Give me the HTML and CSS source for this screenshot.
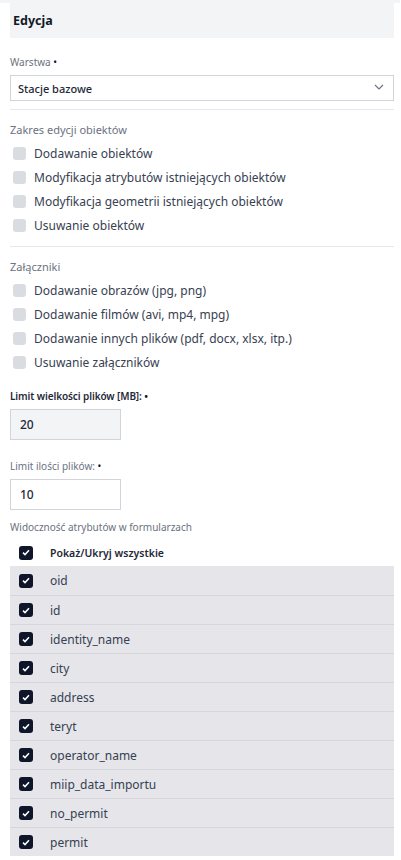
FILE: index.html
```html
<!DOCTYPE html>
<html lang="pl">
<head>
<meta charset="utf-8">
<link rel="stylesheet" href="styles.css">
</head>
<body>
<div class="topbar"></div>
<div class="panel">
  <div class="header">Edycja</div>

  <div class="field-label first">Warstwa <span class="req">•</span></div>
  <div class="select">
    <span>Stacje bazowe</span>
    <svg class="chev" width="10" height="6" viewBox="0 0 10 6"><path d="M1 1l4 4 4-4" fill="none" stroke="#6b7280" stroke-width="1.2"/></svg>
  </div>

  <div class="divider"></div>

  <div class="section">
    <div class="section-label">Zakres edycji obiektów</div>
    <div class="check-row"><span class="box"></span>Dodawanie obiektów</div>
    <div class="check-row"><span class="box"></span>Modyfikacja atrybutów istniejących obiektów</div>
    <div class="check-row"><span class="box"></span>Modyfikacja geometrii istniejących obiektów</div>
    <div class="check-row"><span class="box"></span>Usuwanie obiektów</div>
  </div>

  <div class="divider"></div>

  <div class="section">
    <div class="section-label">Załączniki</div>
    <div class="check-row"><span class="box"></span>Dodawanie obrazów (jpg, png)</div>
    <div class="check-row"><span class="box"></span>Dodawanie filmów (avi, mp4, mpg)</div>
    <div class="check-row"><span class="box"></span>Dodawanie innych plików (pdf, docx, xlsx, itp.)</div>
    <div class="check-row"><span class="box"></span>Usuwanie załączników</div>
  </div>

  <div class="field-label strong limit1">Limit wielkości plików [MB]: <span class="req">•</span></div>
  <div class="num-input disabled">20</div>

  <div class="field-label limit2">Limit ilości plików: <span class="req">•</span></div>
  <div class="num-input">10</div>

  <div class="field-label attrs">Widoczność atrybutów w formularzach</div>
  <div class="all-row">
    <span class="cb"><svg width="8" height="7" viewBox="0 0 8 7"><path d="M1 3.6l2 2L7 1.2" fill="none" stroke="#fff" stroke-width="1.5"/></svg></span>
    <span>Pokaż/Ukryj wszystkie</span>
  </div>
  <div class="attr-list">
    <div class="attr"><span class="cb"><svg width="8" height="7" viewBox="0 0 8 7"><path d="M1 3.6l2 2L7 1.2" fill="none" stroke="#fff" stroke-width="1.5"/></svg></span>oid</div>
    <div class="attr"><span class="cb"><svg width="8" height="7" viewBox="0 0 8 7"><path d="M1 3.6l2 2L7 1.2" fill="none" stroke="#fff" stroke-width="1.5"/></svg></span>id</div>
    <div class="attr"><span class="cb"><svg width="8" height="7" viewBox="0 0 8 7"><path d="M1 3.6l2 2L7 1.2" fill="none" stroke="#fff" stroke-width="1.5"/></svg></span>identity_name</div>
    <div class="attr"><span class="cb"><svg width="8" height="7" viewBox="0 0 8 7"><path d="M1 3.6l2 2L7 1.2" fill="none" stroke="#fff" stroke-width="1.5"/></svg></span>city</div>
    <div class="attr"><span class="cb"><svg width="8" height="7" viewBox="0 0 8 7"><path d="M1 3.6l2 2L7 1.2" fill="none" stroke="#fff" stroke-width="1.5"/></svg></span>address</div>
    <div class="attr"><span class="cb"><svg width="8" height="7" viewBox="0 0 8 7"><path d="M1 3.6l2 2L7 1.2" fill="none" stroke="#fff" stroke-width="1.5"/></svg></span>teryt</div>
    <div class="attr"><span class="cb"><svg width="8" height="7" viewBox="0 0 8 7"><path d="M1 3.6l2 2L7 1.2" fill="none" stroke="#fff" stroke-width="1.5"/></svg></span>operator_name</div>
    <div class="attr"><span class="cb"><svg width="8" height="7" viewBox="0 0 8 7"><path d="M1 3.6l2 2L7 1.2" fill="none" stroke="#fff" stroke-width="1.5"/></svg></span>miip_data_importu</div>
    <div class="attr"><span class="cb"><svg width="8" height="7" viewBox="0 0 8 7"><path d="M1 3.6l2 2L7 1.2" fill="none" stroke="#fff" stroke-width="1.5"/></svg></span>no_permit</div>
    <div class="attr"><span class="cb"><svg width="8" height="7" viewBox="0 0 8 7"><path d="M1 3.6l2 2L7 1.2" fill="none" stroke="#fff" stroke-width="1.5"/></svg></span>permit</div>
  </div>
</div>
</body>
</html>
```
FILE: styles.css
```css
* { box-sizing: border-box; }
html, body { margin: 0; padding: 0; background: #fff; }
body {
  font-family: "Noto Sans", "Open Sans", sans-serif;
  color: #1f2937;
  width: 401px;
  overflow: hidden;
}
.topbar { height: 3px; background: #f3f4f6; width: 400px; }
.panel { padding: 0 7px 0 10px; }
.header {
  height: 35px;
  background: #f3f4f6;
  font-weight: 700;
  font-size: 12.5px;
  color: #111827;
  padding-left: 3px;
  display: flex;
  align-items: center;
}
.field-label {
  font-size: 10px;
  line-height: 14px;
  color: #6b7280;
}
.field-label .req { color: #111827; }
.field-label.first { margin-top: 17px; }
.field-label.strong { color: #1f2937; font-weight: 600; letter-spacing: -0.1px; }
.select {
  margin-top: 6px;
  height: 26px;
  border: 1px solid #d1d5db;
  display: flex;
  align-items: center;
  justify-content: space-between;
  padding: 0 9px 0 7px;
  font-size: 11px;
  font-weight: 500;
  color: #1f2937;
}
.chev { margin-top: -2px; }
.divider { height: 1px; background: #e5e7eb; margin-top: 8px; }
.section { padding-top: 12px; padding-bottom: 1px; }
.section-label {
  font-size: 11px;
  line-height: 16px;
  color: #6b7280;
  margin-bottom: 3px;
}
.check-row {
  display: flex;
  align-items: center;
  height: 24px;
  font-size: 12px;
  color: #374151;
}
.check-row .box {
  width: 13px;
  height: 13px;
  border-radius: 3px;
  background: #d9dce1;
  margin-left: 3px;
  margin-right: 8px;
  flex: none;
}
.limit1 { margin-top: 14px; }
.num-input {
  margin-top: 6px;
  width: 111px;
  height: 31px;
  border: 1px solid #d1d5db;
  display: flex;
  align-items: center;
  padding-left: 9px;
  font-size: 12px;
  font-weight: 500;
  color: #1f2937;
}
.num-input.disabled { background: #f3f4f6; }
.limit2 { margin-top: 19px; }
.attrs { margin-top: 10px; }
.cb {
  width: 14px;
  height: 14px;
  border-radius: 3px;
  background: #0f1629;
  display: flex;
  align-items: center;
  justify-content: center;
  flex: none;
  margin-left: 9px;
  margin-right: 17px;
}
.all-row {
  display: flex;
  align-items: center;
  height: 27px;
  margin-top: 5px;
  font-size: 10.5px;
  font-weight: 600;
  color: #1f2937;
}
.attr-list { background: #e5e5ea; }
.attr {
  display: flex;
  align-items: center;
  height: 29px;
  font-size: 12px;
  color: #374151;
  border-top: 1px solid #d6d7dc;
}
.attr:first-child { border-top: none; }
```
